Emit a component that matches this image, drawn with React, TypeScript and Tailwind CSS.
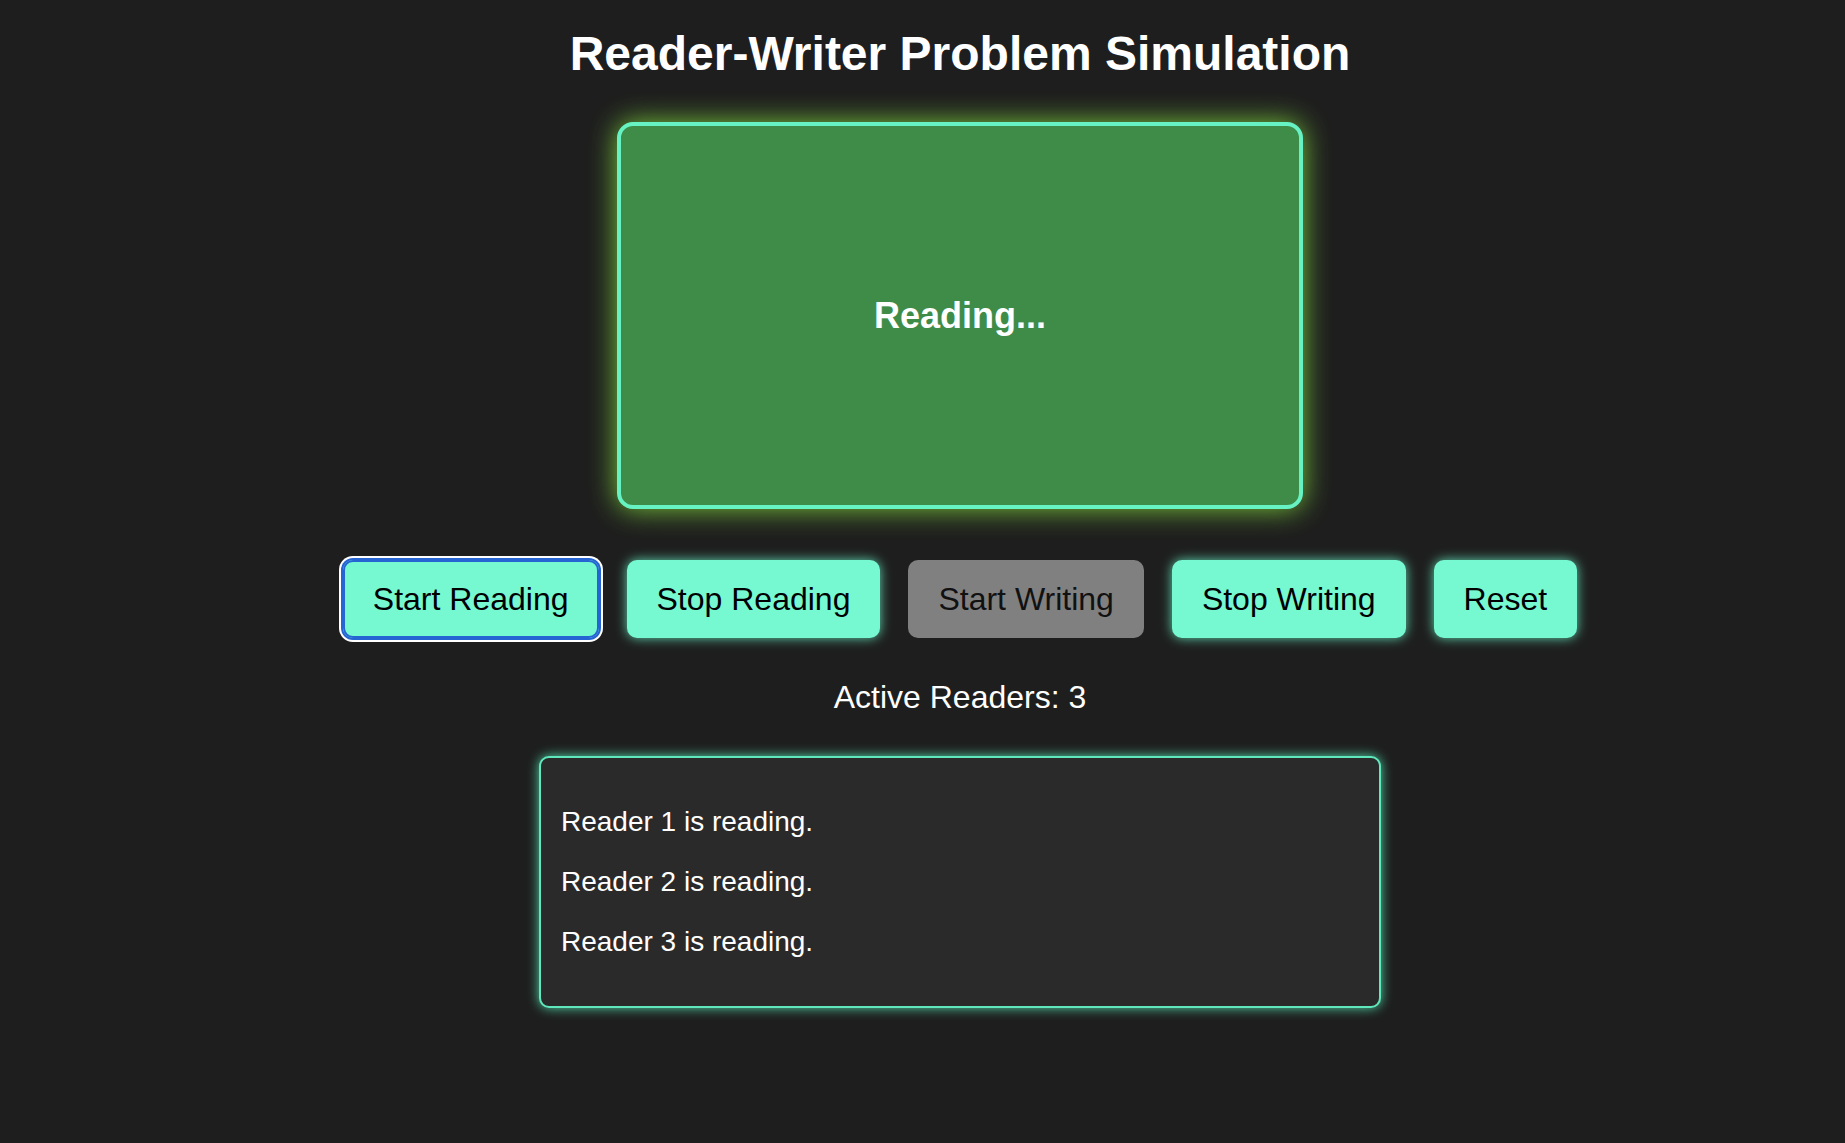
import { useState } from 'react';

type Btn = { label: string; disabled?: boolean; focused?: boolean };

const buttons: Btn[] = [
  { label: 'Start Reading', focused: true },
  { label: 'Stop Reading' },
  { label: 'Start Writing', disabled: true },
  { label: 'Stop Writing' },
  { label: 'Reset' },
];

export default function App() {
  const [readers] = useState(3);
  const log = Array.from({ length: readers }, (_, i) => `Reader ${i + 1} is reading.`);

  return (
    <div className="min-h-screen bg-[#1e1e1e] text-white font-['Liberation_Sans',Arial,sans-serif] pl-[75px]">
      <div className="flex flex-col items-center">
        <h1 className="mt-[26px] text-[48px] leading-[56px] font-bold">Reader-Writer Problem Simulation</h1>

        {/* Shared resource */}
        <div className="mt-[40px] w-[686px] h-[387px] flex items-center justify-center rounded-[16px] border-4 border-[#66f2c3] bg-[#3e8c48] shadow-[0_0_28px_#79c83c]">
          <span className="text-[36px] font-bold">Reading...</span>
        </div>

        {/* Controls */}
        <div className="mt-[51px] flex gap-[28px]">
          {buttons.map(({ label, disabled, focused }) => (
            <button
              key={label}
              disabled={disabled}
              className={
                disabled
                  ? 'h-[78px] px-[30px] rounded-[10px] bg-[#808080] text-[32px] text-[#111]'
                  : focused
                  ? 'h-[78px] px-[30px] rounded-[10px] bg-[#76f8d0] text-[32px] text-black shadow-[inset_0_0_0_2px_#2664d4,0_0_0_2px_#2664d4,0_0_0_4px_#ffffff]'
                  : 'h-[78px] px-[30px] rounded-[10px] bg-[#76f8d0] text-[32px] text-black shadow-[0_0_12px_#5fd6b0]'
              }
            >
              {label}
            </button>
          ))}
        </div>

        <p className="mt-[41px] text-[32px] leading-[37px]">Active Readers: {readers}</p>

        {/* Log */}
        <div className="mt-[40px] w-[842px] rounded-[10px] border-2 border-[#5ee8bb] bg-[#2a2a2a] px-[20px] py-[20px] shadow-[0_0_12px_#4fd6a8]">
          {log.map((line, i) => (
            <p key={i} className="my-[28px] text-[28px] leading-[32px]">{line}</p>
          ))}
        </div>
      </div>
    </div>
  );
}
